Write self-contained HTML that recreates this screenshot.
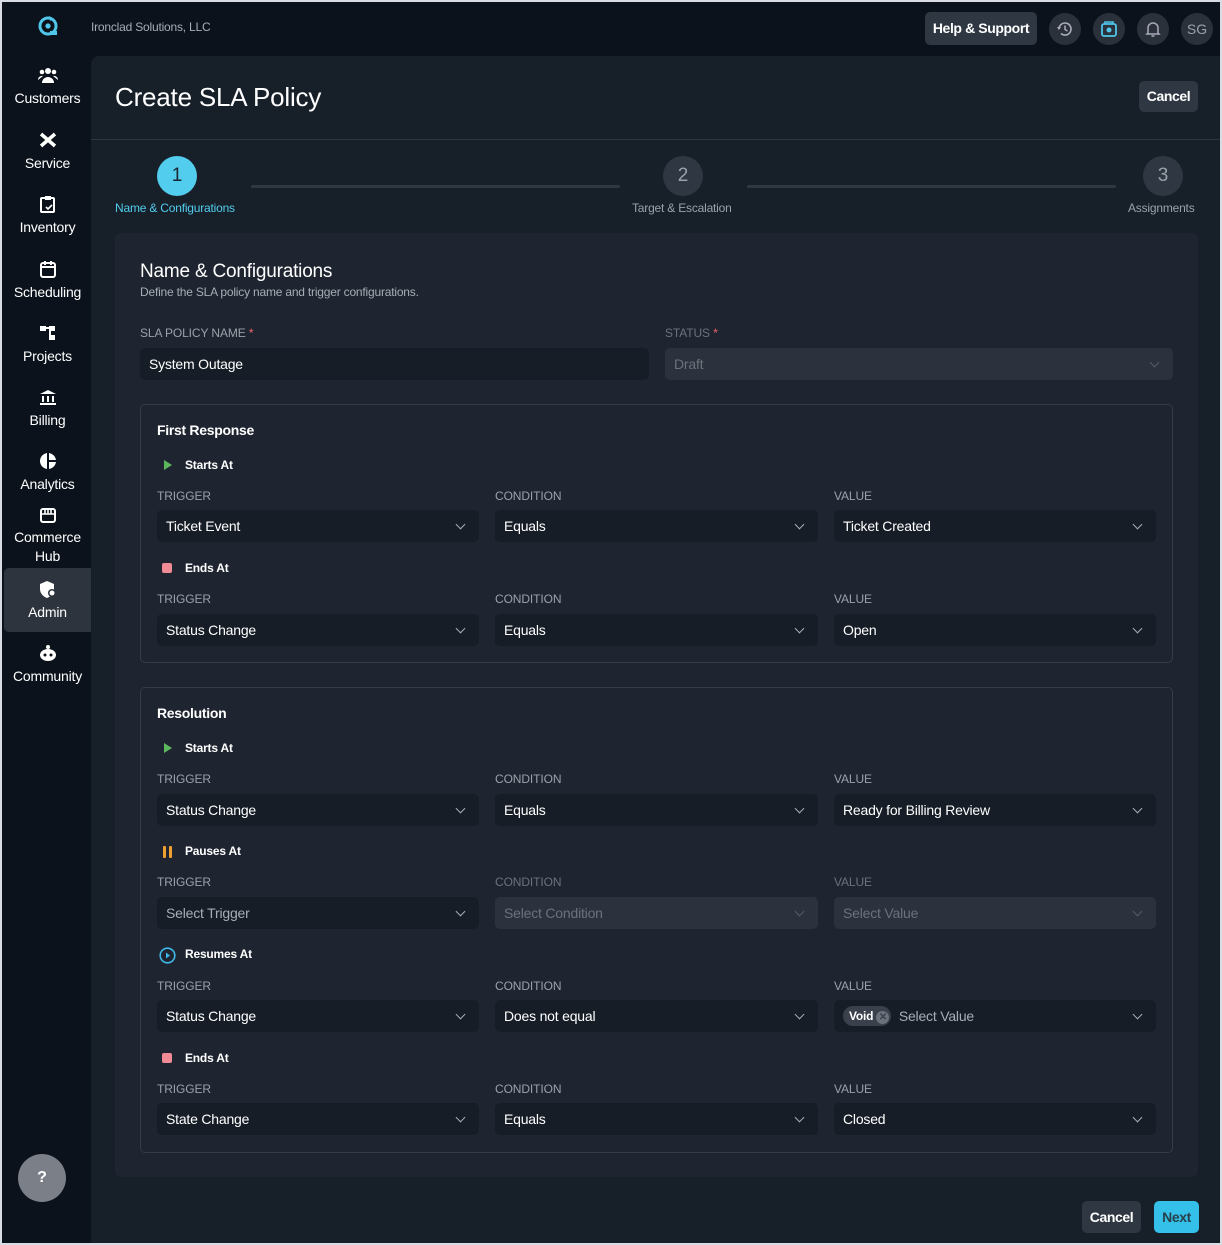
<!DOCTYPE html>
<html><head><meta charset="utf-8"><style>
*{box-sizing:border-box;margin:0;padding:0}
body{width:1222px;height:1245px;background:#d9dde3;font-family:"Liberation Sans",sans-serif;position:relative;overflow:hidden;color:#fff}
.app{position:absolute;left:2px;top:2px;width:1218px;height:1241px;background:#0b121b;overflow:hidden}
.main{position:absolute;left:89px;top:54px;width:1129px;height:1187px;background:#171f29;border-top-left-radius:8px}
.abs{position:absolute}
.nav{position:absolute;left:0;width:91px;text-align:center;font-size:14px;color:#fff;letter-spacing:-.2px}
.nav svg{display:block;margin:0 auto 6px}
.lbl{position:absolute;font-size:12px;color:#9aa1aa;letter-spacing:-.1px}
.sel{position:absolute;height:32px;background:#161d26;border-radius:5px;font-size:14px;color:#fff;padding:0 9px;line-height:32px;letter-spacing:-.2px}
.sel.dis{background:#2b323d;color:#6b727c}
.sel::after{content:"";position:absolute;right:15px;top:11px;width:6px;height:6px;border-right:1.5px solid #aab;border-bottom:1.5px solid #aab;transform:rotate(45deg)}
.sel.dis::after{border-color:#555c66}
.sel.noarrow::after{display:none}
.sub{position:absolute;font-size:12px;font-weight:bold;color:#fff;letter-spacing:-.2px}
.btn{position:absolute;background:#2f3742;border-radius:5px;font-weight:bold;font-size:14px;color:#fff;text-align:center;letter-spacing:-.4px}
.circ{position:absolute;width:32px;height:32px;border-radius:50%;background:#2a313b}
</style></head><body>
<div class="app">
<svg class="abs" style="left:35px;top:12px" width="22" height="22" viewBox="0 0 22 22"><circle cx="11" cy="12" r="8" fill="none" stroke="#4fc6ea" stroke-width="3"/><circle cx="11" cy="12" r="2.6" fill="#4fc6ea"/><path d="M12 2 l4 2 -3 3z" fill="#4fc6ea"/><rect x="13" y="17" width="7" height="4" fill="#4fc6ea"/></svg>
<div class="abs" style="left:89px;top:18px;font-size:12px;color:#a7adb5;letter-spacing:-.2px">Ironclad Solutions, LLC</div>
<div class="btn" style="left:923px;top:10px;width:112px;height:33px;line-height:33px">Help &amp; Support</div>
<div class="circ" style="left:1047px;top:11px"><svg width="32" height="32" viewBox="0 0 32 32"><path d="M10 16a6 6 0 1 1 2 4.5" fill="none" stroke="#aab" stroke-width="1.6"/><path d="M8 14l2 3 2-3" fill="#aab"/><path d="M16 12.5v4l2.5 1.5" fill="none" stroke="#aab" stroke-width="1.5"/></svg></div>
<div class="circ" style="left:1091px;top:11px"><svg width="32" height="32" viewBox="0 0 32 32"><rect x="9" y="11" width="14" height="12" rx="2" fill="none" stroke="#4fc6ea" stroke-width="1.8"/><path d="M12 11v-2h8v2" fill="none" stroke="#4fc6ea" stroke-width="1.6"/><circle cx="16" cy="17" r="2.5" fill="#4fc6ea"/></svg></div>
<div class="circ" style="left:1135px;top:11px"><svg width="32" height="32" viewBox="0 0 32 32"><path d="M11 20v-5a5 5 0 0 1 10 0v5l1 1H10z" fill="none" stroke="#aab" stroke-width="1.5"/><path d="M14.5 23h3" stroke="#aab" stroke-width="1.5"/></svg></div>
<div class="circ" style="left:1179px;top:11px;color:#9aa1aa;font-size:14px;text-align:center;line-height:32px">SG</div>

<div class="nav" style="top:64px"><svg width="20" height="18"><circle cx="10" cy="5" r="3" fill="#fff"/><circle cx="4" cy="6" r="2.3" fill="#fff"/><circle cx="16" cy="6" r="2.3" fill="#fff"/><path d="M4 17a6 6 0 0 1 12 0z M0 14a4 4 0 0 1 5-4 M20 14a4 4 0 0 0-5-4" fill="#fff"/></svg>Customers</div>
<div class="nav" style="top:129px"><svg width="20" height="18"><path d="M3 3l14 12M17 3L3 15" stroke="#fff" stroke-width="3.5"/></svg>Service</div>
<div class="nav" style="top:193px"><svg width="20" height="18"><rect x="3" y="3" width="13" height="14" rx="1" fill="none" stroke="#fff" stroke-width="2"/><rect x="7" y="1" width="6" height="4" fill="#fff"/><path d="M8 12l2 2 4-4" stroke="#fff" stroke-width="1.6" fill="none"/></svg>Inventory</div>
<div class="nav" style="top:258px"><svg width="20" height="18"><rect x="3" y="3" width="14" height="14" rx="2" fill="none" stroke="#fff" stroke-width="2"/><path d="M3 7h14M7 1v4M13 1v4" stroke="#fff" stroke-width="2"/></svg>Scheduling</div>
<div class="nav" style="top:322px"><svg width="20" height="18"><rect x="2" y="2" width="6" height="5" fill="#fff"/><rect x="11" y="2" width="6" height="5" fill="#fff"/><rect x="11" y="11" width="6" height="5" fill="#fff"/><path d="M8 4h3M12 7v6" stroke="#fff" stroke-width="2"/></svg>Projects</div>
<div class="nav" style="top:386px"><svg width="20" height="18"><path d="M2 6l8-4 8 4z" fill="#fff"/><path d="M5 8v6M10 8v6M15 8v6M2 16h16" stroke="#fff" stroke-width="2"/></svg>Billing</div>
<div class="nav" style="top:450px"><svg width="20" height="18"><circle cx="10" cy="9" r="8" fill="#fff"/><path d="M10 1v16M10 9h8" stroke="#0b121b" stroke-width="2"/></svg>Analytics</div>
<div class="nav" style="top:504px;line-height:19px"><svg width="20" height="18" style="margin-bottom:4px"><rect x="3" y="3" width="14" height="13" rx="2" fill="none" stroke="#fff" stroke-width="2"/><path d="M3 8h14M7 3v5M10 3v5M13 3v5" stroke="#fff" stroke-width="1.6"/></svg>Commerce<br>Hub</div>
<div class="abs" style="left:2px;top:566px;width:87px;height:64px;background:#2d343e;border-radius:5px 0 0 5px"></div>
<div class="nav" style="top:578px"><svg width="20" height="18"><path d="M9 1l7 3v5c0 5-4 8-7 9-3-1-7-4-7-9V4z" fill="#fff"/><circle cx="14" cy="13" r="4" fill="#2d343e"/><circle cx="14" cy="13" r="2.5" fill="#fff"/></svg>Admin</div>
<div class="nav" style="top:642px"><svg width="20" height="18"><ellipse cx="10" cy="11" rx="8" ry="6" fill="#fff"/><circle cx="10" cy="3" r="2" fill="#fff"/><circle cx="7" cy="11" r="1.5" fill="#0b121b"/><circle cx="13" cy="11" r="1.5" fill="#0b121b"/></svg>Community</div>
<div class="abs" style="left:16px;top:1152px;width:48px;height:48px;border-radius:50%;background:#7b8088;color:#fff;font-weight:bold;font-size:16px;text-align:center;line-height:48px">?</div>

<div class="main">
<div class="abs" style="left:24px;top:26px;font-size:26px;letter-spacing:-.2px">Create SLA Policy</div>
<div class="btn" style="left:1048px;top:25px;width:59px;height:31px;line-height:31px">Cancel</div>
<div class="abs" style="left:0;top:83px;width:1129px;height:1px;background:#2e3640"></div>

<div class="abs" style="left:66px;top:100px;width:40px;height:40px;border-radius:50%;background:#52cdee;color:#1a2630;font-size:19px;text-align:center;line-height:40px">1</div>
<div class="abs" style="left:24px;top:145px;font-size:12px;color:#52cdee;letter-spacing:-.2px">Name &amp; Configurations</div>
<div class="abs" style="left:160px;top:129px;width:369px;height:3px;background:#2f3742;border-radius:2px"></div>
<div class="abs" style="left:572px;top:100px;width:40px;height:40px;border-radius:50%;background:#2f3742;color:#9aa1aa;font-size:19px;text-align:center;line-height:40px">2</div>
<div class="abs" style="left:541px;top:145px;font-size:12px;color:#9aa1aa;letter-spacing:-.2px">Target &amp; Escalation</div>
<div class="abs" style="left:656px;top:129px;width:369px;height:3px;background:#2f3742;border-radius:2px"></div>
<div class="abs" style="left:1052px;top:100px;width:40px;height:40px;border-radius:50%;background:#2f3742;color:#9aa1aa;font-size:19px;text-align:center;line-height:40px">3</div>
<div class="abs" style="left:1037px;top:145px;font-size:12px;color:#9aa1aa;letter-spacing:-.2px">Assignments</div>

<div class="abs" style="left:24px;top:177px;width:1083px;height:944px;background:#1f2530;border-radius:6px"></div>
<div class="abs" style="left:49px;top:205px;font-size:19px;letter-spacing:-.2px">Name &amp; Configurations</div>
<div class="abs" style="left:49px;top:229px;font-size:12px;color:#a7adb5;letter-spacing:-.2px">Define the SLA policy name and trigger configurations.</div>
<div class="lbl" style="left:49px;top:270px">SLA POLICY NAME <span style="color:#f06272">*</span></div>
<div class="lbl" style="left:574px;top:270px;color:#6b727c">STATUS <span style="color:#f06272">*</span></div>
<div class="sel noarrow" style="left:49px;top:292px;width:509px">System Outage</div>
<div class="sel dis" style="left:574px;top:292px;width:508px">Draft</div>

<div class="abs" style="left:49px;top:348px;width:1033px;height:259px;border:1px solid #343c47;border-radius:5px"></div>
<div class="abs" style="left:66px;top:366px;font-size:14px;font-weight:bold;letter-spacing:-.3px">First Response</div>
<svg class="abs" style="left:72px;top:403px" width="10" height="12"><path d="M1 1l8 5-8 5z" fill="#5cb85c"/></svg>
<div class="sub" style="left:94px;top:402px">Starts At</div>
<div class="lbl" style="left:66px;top:433px">TRIGGER</div><div class="lbl" style="left:404px;top:433px">CONDITION</div><div class="lbl" style="left:743px;top:433px">VALUE</div>
<div class="sel" style="left:66px;top:454px;width:322px">Ticket Event</div>
<div class="sel" style="left:404px;top:454px;width:323px">Equals</div>
<div class="sel" style="left:743px;top:454px;width:322px">Ticket Created</div>
<div class="abs" style="left:71px;top:507px;width:10px;height:10px;background:#f08a95;border-radius:2px"></div>
<div class="sub" style="left:94px;top:505px">Ends At</div>
<div class="lbl" style="left:66px;top:536px">TRIGGER</div><div class="lbl" style="left:404px;top:536px">CONDITION</div><div class="lbl" style="left:743px;top:536px">VALUE</div>
<div class="sel" style="left:66px;top:558px;width:322px">Status Change</div>
<div class="sel" style="left:404px;top:558px;width:323px">Equals</div>
<div class="sel" style="left:743px;top:558px;width:322px">Open</div>

<div class="abs" style="left:49px;top:631px;width:1033px;height:466px;border:1px solid #343c47;border-radius:5px"></div>
<div class="abs" style="left:66px;top:649px;font-size:14px;font-weight:bold;letter-spacing:-.3px">Resolution</div>
<svg class="abs" style="left:72px;top:686px" width="10" height="12"><path d="M1 1l8 5-8 5z" fill="#5cb85c"/></svg>
<div class="sub" style="left:94px;top:685px">Starts At</div>
<div class="lbl" style="left:66px;top:716px">TRIGGER</div><div class="lbl" style="left:404px;top:716px">CONDITION</div><div class="lbl" style="left:743px;top:716px">VALUE</div>
<div class="sel" style="left:66px;top:738px;width:322px">Status Change</div>
<div class="sel" style="left:404px;top:738px;width:323px">Equals</div>
<div class="sel" style="left:743px;top:738px;width:322px">Ready for Billing Review</div>
<div class="abs" style="left:72px;top:790px;width:3px;height:12px;background:#f0a030;border-radius:1px"></div>
<div class="abs" style="left:78px;top:790px;width:3px;height:12px;background:#f0a030;border-radius:1px"></div>
<div class="sub" style="left:94px;top:788px">Pauses At</div>
<div class="lbl" style="left:66px;top:819px">TRIGGER</div><div class="lbl" style="left:404px;top:819px;color:#6b727c">CONDITION</div><div class="lbl" style="left:743px;top:819px;color:#6b727c">VALUE</div>
<div class="sel" style="left:66px;top:841px;width:322px;color:#a7adb5">Select Trigger</div>
<div class="sel dis" style="left:404px;top:841px;width:323px">Select Condition</div>
<div class="sel dis" style="left:743px;top:841px;width:322px">Select Value</div>
<svg class="abs" style="left:68px;top:891px" width="17" height="17"><circle cx="8.5" cy="8.5" r="7.3" fill="none" stroke="#3fb8ea" stroke-width="1.6"/><path d="M7 5.5l4 3-4 3z" fill="#3fb8ea"/></svg>
<div class="sub" style="left:94px;top:891px">Resumes At</div>
<div class="lbl" style="left:66px;top:923px">TRIGGER</div><div class="lbl" style="left:404px;top:923px">CONDITION</div><div class="lbl" style="left:743px;top:923px">VALUE</div>
<div class="sel" style="left:66px;top:944px;width:322px">Status Change</div>
<div class="sel" style="left:404px;top:944px;width:323px">Does not equal</div>
<div class="sel" style="left:743px;top:944px;width:322px;color:#a7adb5"><span style="display:inline-block;background:#3a414c;border-radius:10px;height:20px;line-height:20px;padding:0 2px 0 6px;font-size:12px;font-weight:bold;color:#fff;vertical-align:1px">Void <span style="display:inline-block;width:13px;height:13px;border-radius:50%;background:#6b727c;color:#3a414c;font-size:10px;line-height:13px;text-align:center;vertical-align:0">✕</span></span>&nbsp; Select Value</div>
<div class="abs" style="left:71px;top:997px;width:10px;height:10px;background:#f08a95;border-radius:2px"></div>
<div class="sub" style="left:94px;top:995px">Ends At</div>
<div class="lbl" style="left:66px;top:1026px">TRIGGER</div><div class="lbl" style="left:404px;top:1026px">CONDITION</div><div class="lbl" style="left:743px;top:1026px">VALUE</div>
<div class="sel" style="left:66px;top:1047px;width:322px">State Change</div>
<div class="sel" style="left:404px;top:1047px;width:323px">Equals</div>
<div class="sel" style="left:743px;top:1047px;width:322px">Closed</div>

<div class="btn" style="left:991px;top:1145px;width:59px;height:32px;line-height:32px">Cancel</div>
<div class="btn" style="left:1063px;top:1145px;width:45px;height:32px;line-height:32px;background:#34c0e8;color:#27404c">Next</div>
</div>
</div>
</body></html>
